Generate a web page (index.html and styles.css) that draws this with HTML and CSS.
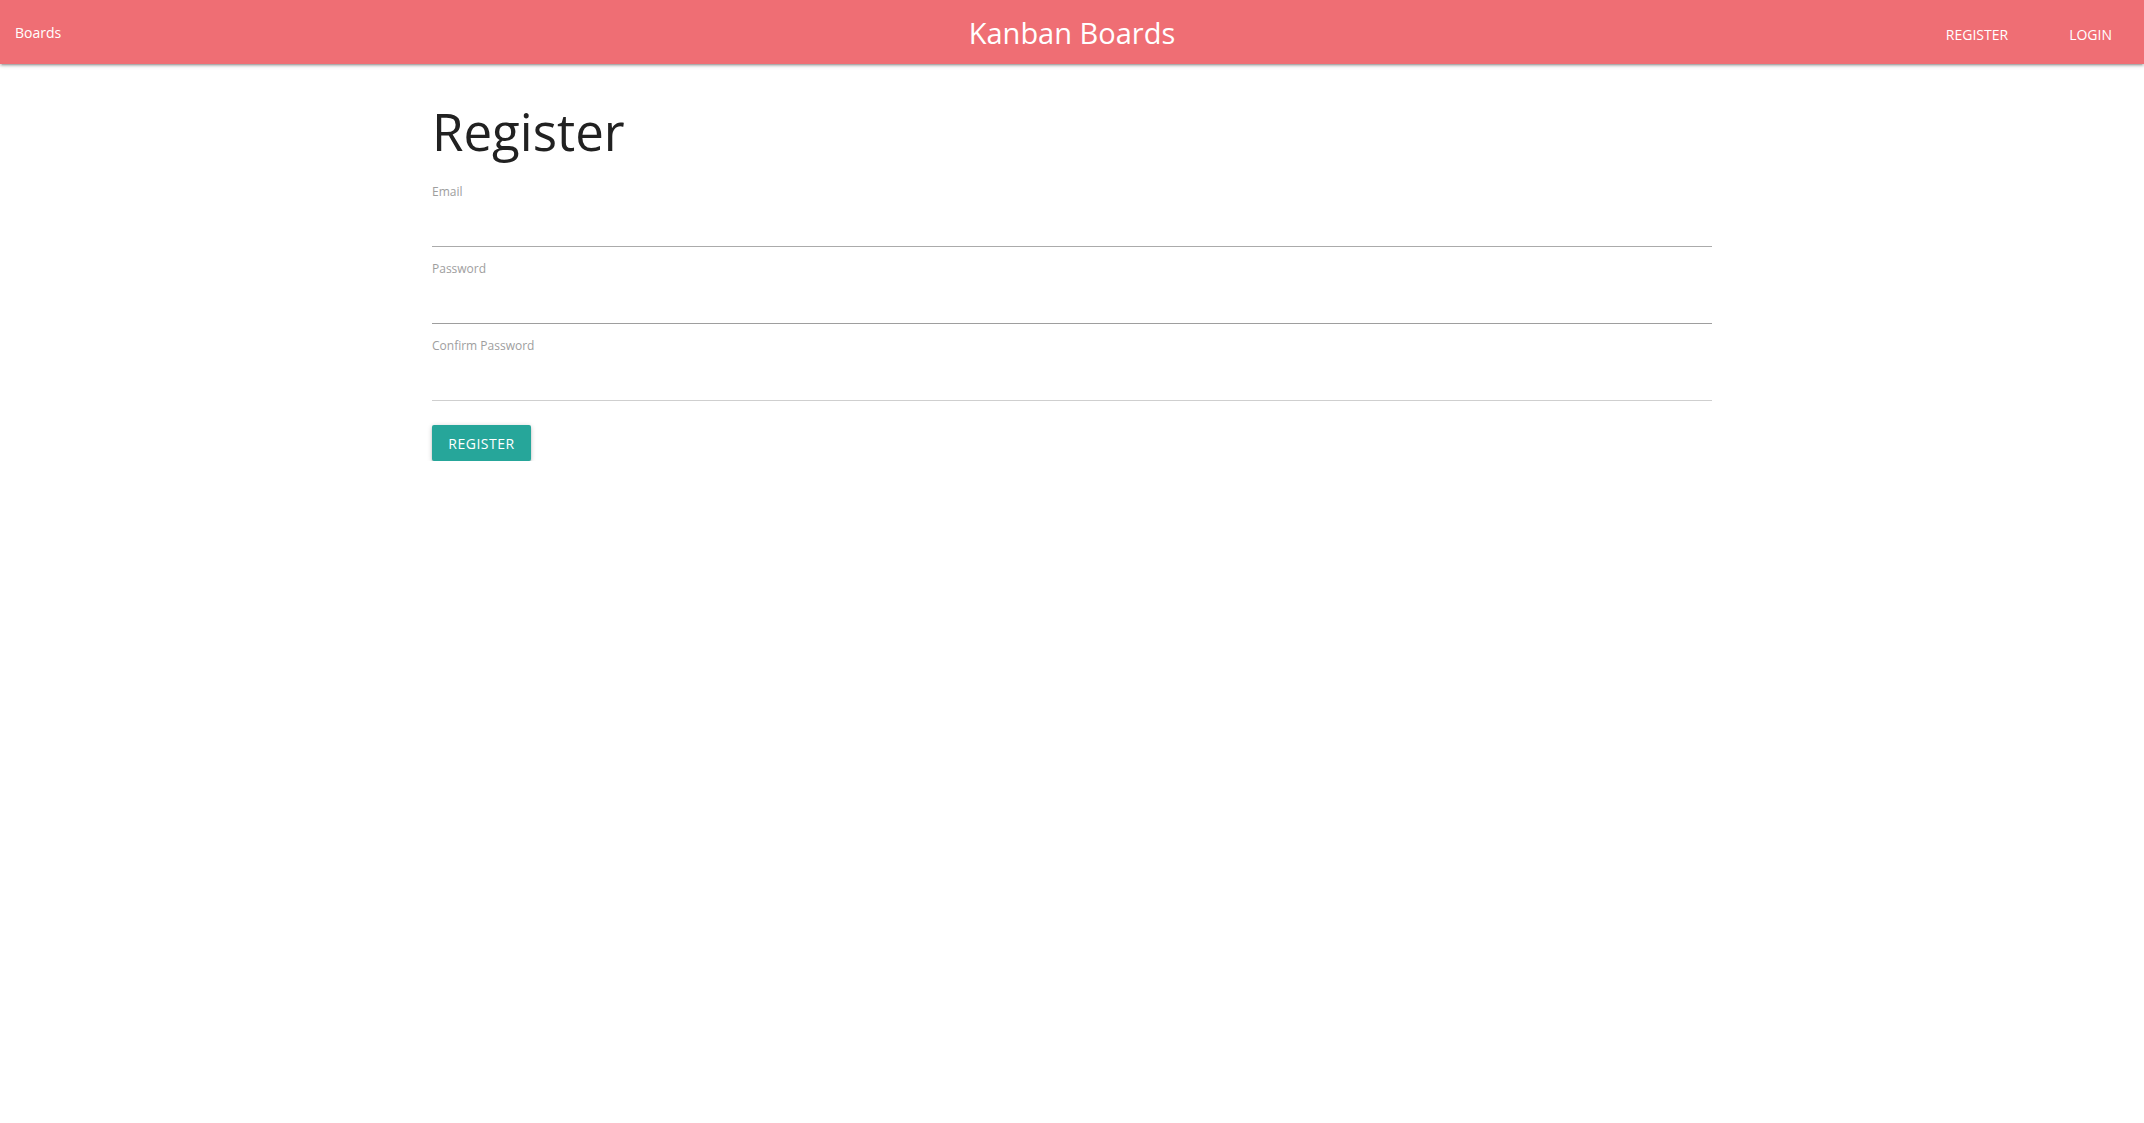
FILE: index.html
```html
<!DOCTYPE html>
<html lang="en">
<head>
<meta charset="utf-8">
<title>Kanban Boards</title>
<link rel="stylesheet" href="styles.css">
</head>
<body>
<nav class="navbar">
  <a class="nav-left" href="#">Boards</a>
  <a class="brand" href="#">Kanban Boards</a>
  <ul class="nav-links">
    <li><a href="#">REGISTER</a></li>
    <li><a href="#">LOGIN</a></li>
  </ul>
</nav>
<main class="container">
  <h1 class="title">Register</h1>
  <form class="form">
    <div class="field">
      <label class="field-label">Email</label>
      <input class="field-input field-input--a" type="email">
    </div>
    <div class="field">
      <label class="field-label">Password</label>
      <input class="field-input field-input--b" type="password">
    </div>
    <div class="field">
      <label class="field-label">Confirm Password</label>
      <input class="field-input field-input--c" type="password">
    </div>
    <button class="btn" type="button">REGISTER</button>
  </form>
</main>
</body>
</html>
```
FILE: styles.css
```css
* { box-sizing: border-box; }
html, body { margin: 0; padding: 0; background: #fff; }
body { font-family: "Open Sans", "Noto Sans", sans-serif; color: #212121; }

.navbar {
  height: 64px;
  background: #ef6e74;
  display: grid;
  grid-template-columns: 1fr auto 1fr;
  align-items: center;
  box-shadow: 0 2px 2px 0 rgba(0,0,0,0.14), 0 3px 1px -2px rgba(0,0,0,0.12), 0 1px 5px 0 rgba(0,0,0,0.2);
  position: relative;
  z-index: 1;
}
.nav-left {
  color: #fff;
  text-decoration: none;
  font-size: 14px;
  padding-left: 15px;
  margin-top: -3px;
  justify-self: start;
}
.brand {
  color: #fff;
  text-decoration: none;
  font-size: 29px;
  line-height: 64px;
  margin-top: -2px;
}
.nav-links {
  list-style: none;
  margin: 0;
  padding: 0 17px 0 0;
  display: flex;
  justify-self: end;
  gap: 31px;
}
.nav-links a {
  color: #fff;
  text-decoration: none;
  font-size: 14px;
  display: block;
  padding: 0 15px;
  line-height: 64px;
  margin-top: 3px;
}

.container {
  width: 1280px;
  margin: 0 auto;
  padding-top: 39px;
}
.title {
  margin: 0;
  font-size: 51px;
  font-weight: 400;
  line-height: 57px;
  color: #212121;
}
.form { margin-top: 24px; }
.field { margin-bottom: 14px; }
.field-label {
  display: block;
  font-size: 12px;
  line-height: 16px;
  color: #9e9e9e;
}
.field-input {
  display: block;
  width: 100%;
  height: 47px;
  border: 0;
  border-bottom: 1px solid #9e9e9e;
  background: transparent;
  outline: none;
  font: inherit;
  padding: 0;
}
.field-input--a { border-bottom-color: #ababab; }
.field-input--b { border-bottom-color: #9e9e9e; }
.field-input--c { border-bottom-color: #cfcfcf; }

.btn {
  margin-top: 10px;
  height: 36px;
  width: 99px;
  border: 0;
  border-radius: 2px;
  background: #26a69a;
  color: #fff;
  font-family: inherit;
  font-size: 14px;
  letter-spacing: 0.5px;
  padding: 0;
  box-shadow: 0 2px 2px 0 rgba(0,0,0,0.14), 0 3px 1px -2px rgba(0,0,0,0.12), 0 1px 5px 0 rgba(0,0,0,0.2);
  cursor: pointer;
}
```
